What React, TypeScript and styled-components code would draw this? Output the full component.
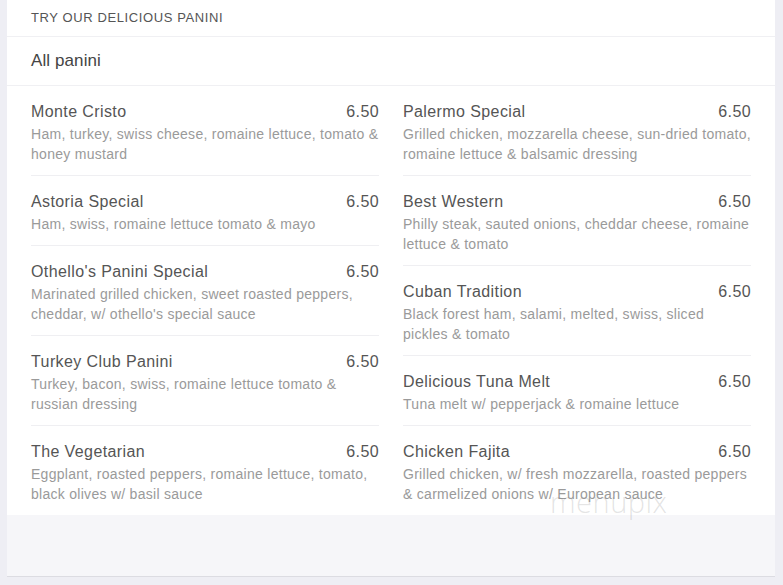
import React from "react";
import styled, { createGlobalStyle } from "styled-components";

const Global = createGlobalStyle`
  html, body { margin: 0; padding: 0; background: #eeeef4; }
  body { font-family: "Liberation Sans", Arial, sans-serif; }
`;

const Page = styled.div`
  width: 783px;
  height: 585px;
  box-sizing: border-box;
  padding: 0 8px 0 7px;
  background: #eeeef4;
  overflow: hidden;
`;

const Panel = styled.div`
  position: relative;
  background: #ffffff;
  border-bottom: 1px solid #dcdce2;
  display: flex;
  flex-direction: column;
`;

const SectionTitle = styled.div`
  height: 37px;
  box-sizing: border-box;
  padding: 0 24px 2px;
  display: flex;
  align-items: center;
  border-bottom: 1px solid #f0f0f3;
  font-size: 13px;
  color: #555;
  letter-spacing: 0.6px;
`;

const GroupTitle = styled.div`
  height: 49px;
  box-sizing: border-box;
  padding: 0 24px;
  display: flex;
  align-items: center;
  border-bottom: 1px solid #f0f0f3;
  font-size: 17px;
  letter-spacing: 0.1px;
  color: #444;
`;

const Columns = styled.div`
  display: grid;
  grid-template-columns: 1fr 1fr;
  column-gap: 24px;
  padding: 0 24px;
`;

const Column = styled.div`
  display: flex;
  flex-direction: column;
`;

const Item = styled.div`
  padding: 15px 0 11px;
  border-bottom: 1px solid #efeff2;
  &:last-child { border-bottom: none; }
`;

const ItemHead = styled.div`
  display: flex;
  justify-content: space-between;
  align-items: baseline;
  font-size: 16px;
  line-height: 22px;
  letter-spacing: 0.4px;
  color: #555;
  margin-bottom: 1px;
`;

const Desc = styled.div`
  font-size: 14px;
  line-height: 20px;
  color: #9a9a9a;
  letter-spacing: 0.28px;
`;

const Footer = styled.div`
  height: 61px;
  background: #f6f6f9;
`;

const Watermark = styled.div`
  position: absolute;
  left: 543px;
  top: 482px;
  font-size: 29px;
  font-weight: 300;
  font-family: "Open Sans", sans-serif;
  color: rgba(120, 120, 120, 0.2);
  letter-spacing: 0.5px;
  pointer-events: none;
`;

type MenuItem = { name: string; price: string; desc: string };

const left: MenuItem[] = [
  { name: "Monte Cristo", price: "6.50", desc: "Ham, turkey, swiss cheese, romaine lettuce, tomato & honey mustard" },
  { name: "Astoria Special", price: "6.50", desc: "Ham, swiss, romaine lettuce tomato & mayo" },
  { name: "Othello's Panini Special", price: "6.50", desc: "Marinated grilled chicken, sweet roasted peppers, cheddar, w/ othello's special sauce" },
  { name: "Turkey Club Panini", price: "6.50", desc: "Turkey, bacon, swiss, romaine lettuce tomato & russian dressing" },
  { name: "The Vegetarian", price: "6.50", desc: "Eggplant, roasted peppers, romaine lettuce, tomato, black olives w/ basil sauce" },
];

const right: MenuItem[] = [
  { name: "Palermo Special", price: "6.50", desc: "Grilled chicken, mozzarella cheese, sun-dried tomato, romaine lettuce & balsamic dressing" },
  { name: "Best Western", price: "6.50", desc: "Philly steak, sauted onions, cheddar cheese, romaine lettuce & tomato" },
  { name: "Cuban Tradition", price: "6.50", desc: "Black forest ham, salami, melted, swiss, sliced pickles & tomato" },
  { name: "Delicious Tuna Melt", price: "6.50", desc: "Tuna melt w/ pepperjack & romaine lettuce" },
  { name: "Chicken Fajita", price: "6.50", desc: "Grilled chicken, w/ fresh mozzarella, roasted peppers & carmelized onions w/ European sauce" },
];

const renderItems = (items: MenuItem[]) =>
  items.map((it) => (
    <Item key={it.name}>
      <ItemHead>
        <span>{it.name}</span>
        <span>{it.price}</span>
      </ItemHead>
      <Desc>{it.desc}</Desc>
    </Item>
  ));

export default function App() {
  return (
    <Page>
      <Global />
      <Panel>
        <SectionTitle>TRY OUR DELICIOUS PANINI</SectionTitle>
        <GroupTitle>All panini</GroupTitle>
        <Columns>
          <Column>{renderItems(left)}</Column>
          <Column>{renderItems(right)}</Column>
        </Columns>
        <Footer />
        <Watermark>menupix</Watermark>
      </Panel>
    </Page>
  );
}
